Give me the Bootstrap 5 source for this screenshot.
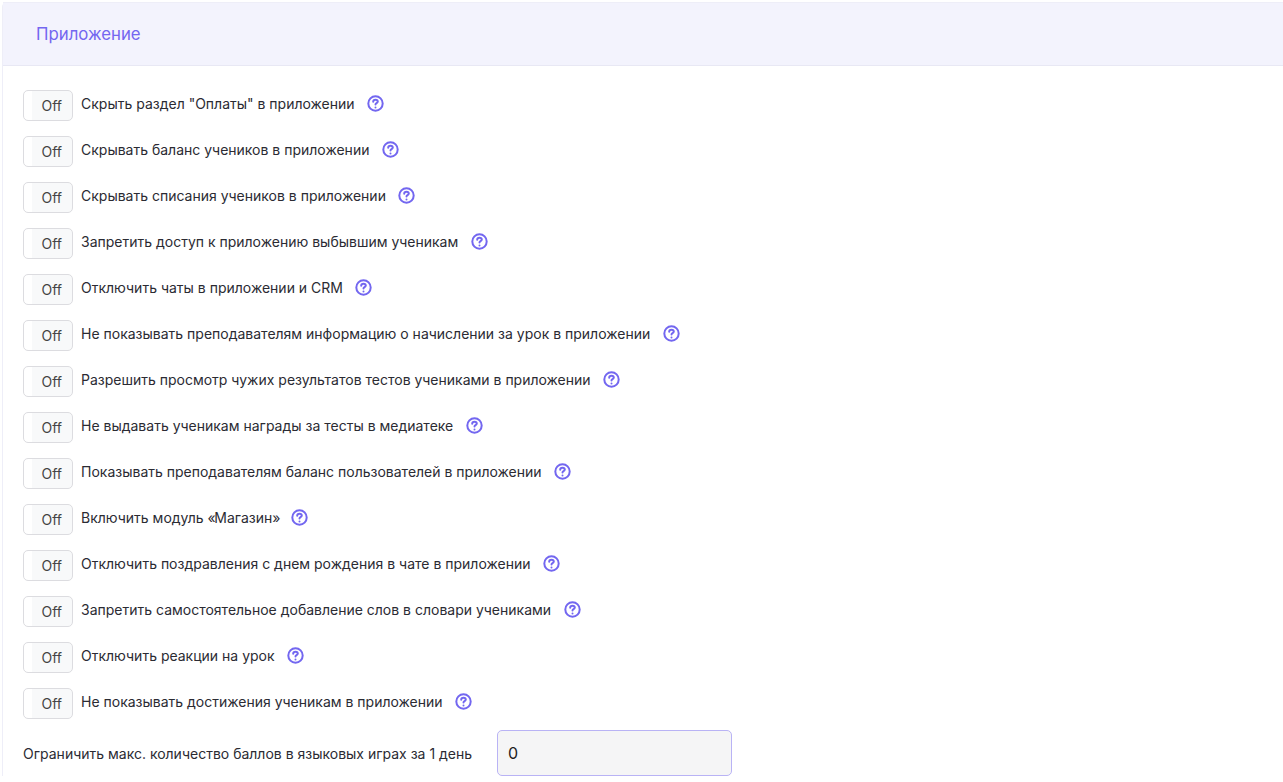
<!DOCTYPE html>
<html lang="ru"><head><meta charset="utf-8"><title>Приложение</title>
<link href="https://cdn.jsdelivr.net/npm/bootstrap@5.3.0/dist/css/bootstrap.min.css" rel="stylesheet">
<style>
html,body{height:782px;overflow:hidden;background:#fff}
body{font-family:Inter,"Noto Sans",sans-serif;font-size:14px;color:#2b2b33;padding:2px 0 0 2px}
.sect-card{border:0;border-left:1px solid #eeeef8;border-radius:5px 0 0 0;background:#fff;width:calc(100% + 4px)}
.sect-head{background:#f3f3fd;border-bottom:1px solid #e8e8f4;border-top:1px solid #eeeef8;height:64px;padding:2px 33px 0;font-size:16.8px;color:#7367f0;display:flex;align-items:center}
.sect-body{padding:24px 20px 0}
.opt-row{height:31px;margin-bottom:15px}
.tgl{width:50px;height:31px;border:1px solid #dcdce0;border-radius:5px;background:linear-gradient(90deg,#fff 0 8px,#f8f9fa 8px);color:#444;display:flex;align-items:center;justify-content:flex-end;padding:0 10px 0 0;font-size:14px;flex:none}
.opt-text{margin-left:8px;margin-top:-4px;white-space:nowrap}
.tq{letter-spacing:-1.5px}
.hint{margin-left:12.5px;margin-top:-4px;width:17px;height:17px;flex:none;display:block}
.lim-row{height:46px;margin-top:-4px}
.lim-input{width:235px;height:46px;margin-left:25px;background:#f5f5f6;border:1px solid #b9b3f5;border-radius:5px;padding:0 10px;font-size:16px;color:#222;font-family:inherit}
</style></head>
<body>
<div class="card sect-card">
<div class="sect-head">Приложение</div>
<div class="sect-body" id="opts"></div>
</div>
<script>
const items=['Скрыть раздел "Оплаты" в приложении','Скрывать баланс учеников в приложении','Скрывать списания учеников в приложении','Запретить доступ к приложению выбывшим ученикам','Отключить чаты в приложении и CRM','Не показывать преподавателям информацию о начислении за урок в приложении','Разрешить просмотр чужих результатов тестов учениками в приложении','Не выдавать ученикам награды за тесты в медиатеке','Показывать преподавателям баланс пользователей в приложении','Включить модуль <span class="tq">«</span>Магазин<span class="tq">»</span>','Отключить поздравления с днем рождения в чате в приложении','Запретить самостоятельное добавление слов в словари учениками','Отключить реакции на урок','Не показывать достижения ученикам в приложении'];
const ic='<svg class="hint" viewBox="0 0 17 17" fill="none" stroke="#7367f0" stroke-width="2" stroke-linecap="round" stroke-linejoin="round"><circle cx="8.5" cy="8.5" r="7.2"/><path d="M6.2 6.7c0-1.3 1-2 2.3-2s2.3.7 2.3 1.9c0 1.6-2.3 1.6-2.3 3"/><path d="M8.5 12.4v.1"/></svg>';
document.getElementById('opts').innerHTML=items.map(t=>`<div class="d-flex align-items-center opt-row"><div class="tgl">Off</div><span class="opt-text">${t}</span>${ic}</div>`).join('')+'<div class="d-flex align-items-center lim-row"><span>Ограничить макс. количество баллов в языковых играх за 1 день</span><input class="lim-input" value="0"></div>';
</script>
<script src="https://cdn.jsdelivr.net/npm/bootstrap@5.3.0/dist/js/bootstrap.bundle.min.js"></script>
</body></html>
